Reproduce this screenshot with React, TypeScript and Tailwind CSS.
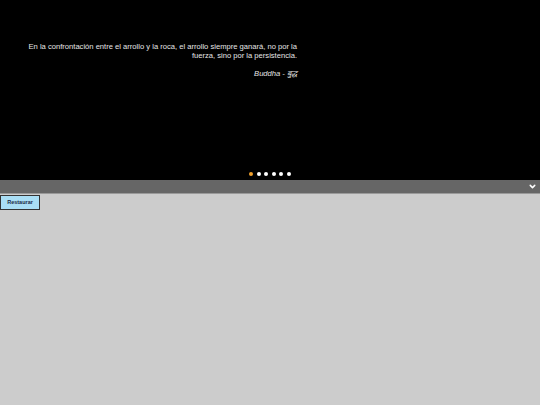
import { ChevronDown } from 'lucide-react';

const dots = [true, false, false, false, false, false];

export default function App() {
  return (
    <div className="min-h-[405px] bg-[#cccccc] antialiased font-['Liberation_Sans',Arial,sans-serif]">
      <div className="h-[180px] bg-black flex flex-col">
        <div className="flex-1 pt-[42px] pl-[25px]">
          <div className="w-[272px] text-right text-[7.6px] leading-[9px] text-[#e6e6e6]">
            <p>
              En la confrontación entre el arrollo y la roca, el arrollo siempre ganará, no por la fuerza, sino
              por la persistencia.
            </p>
            <p className="mt-[9px] italic">Buddha - बुद्ध</p>
          </div>
        </div>
        <div className="flex justify-center gap-[3.5px] pb-[4px]">
          {dots.map((active, i) => (
            <span
              key={i}
              className={`w-[4px] h-[4px] rounded-full ${active ? 'bg-[#f0a02c]' : 'bg-white'}`}
            />
          ))}
        </div>
      </div>
      <div className="h-[14px] bg-[#666666] flex items-center justify-end pr-[3px] border-b border-[#999]">
        <ChevronDown className="w-[9px] h-[9px] text-white" strokeWidth={4} />
      </div>
      <div className="flex pt-[1px]">
        <button className="flex items-center justify-center w-[40px] h-[15px] bg-[#a9def5] border border-[#333] text-[5.5px] font-bold text-[#1a2a44] leading-none">
          Restaurar
        </button>
      </div>
    </div>
  );
}
